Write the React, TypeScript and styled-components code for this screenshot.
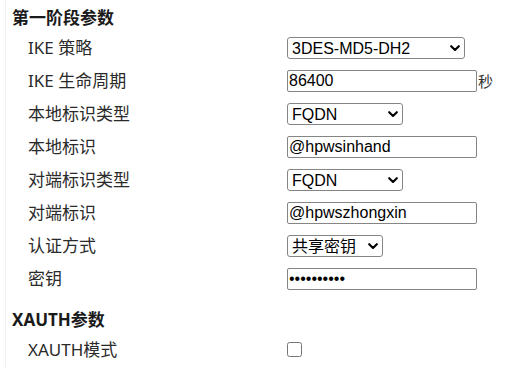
import React from "react";
import styled, { createGlobalStyle } from "styled-components";

const Global = createGlobalStyle`
  html, body { margin: 0; padding: 0; background: #fff; }
  body { font-family: "Noto Sans", "Noto Sans CJK SC", sans-serif; }
`;

const Frame = styled.div`
  margin-left: 5px;
  border-left: 1px solid #f1f1f1;
  height: 368px;
  padding-top: 1px;
  box-sizing: border-box;
`;

const Section = styled.section<{ $gap?: number }>`
  margin-top: ${(p) => p.$gap ?? 0}px;
`;

const Header = styled.div`
  height: 30px;
  display: flex;
  align-items: center;
  padding-left: 6px;
  font-family: "Noto Sans", "Noto Sans CJK SC", sans-serif;
  font-weight: 700;
  font-size: 17px;
  color: #1a1a1a;
`;

const Row = styled.div`
  height: 33px;
  display: grid;
  grid-template-columns: 259px 1fr;
  align-items: center;
  padding-left: 22px;
`;

const Label = styled.div`
  font-family: "Noto Sans", "Noto Sans CJK SC", sans-serif;
  font-size: 17px;
  line-height: 20px;
  color: #2a2a2a;
`;

const Field = styled.div`
  display: flex;
  align-items: center;
`;

const SelectBox = styled.div<{ $w: number }>`
  position: relative;
  width: ${(p) => p.$w}px;
  height: 22px;
`;

const Select = styled.select`
  appearance: none;
  -webkit-appearance: none;
  width: 100%;
  height: 100%;
  font-family: "Liberation Sans", Arial, "Noto Sans CJK SC", sans-serif;
  font-size: 16px;
  color: #000;
  background: #fff;
  border: 1px solid #858585;
  border-radius: 3px;
  padding: 0 0 0 4px;
  margin: 0;
  box-sizing: border-box;
  outline: none;
`;

const Chevron = styled.svg`
  position: absolute;
  right: 5px;
  top: 8px;
  width: 10px;
  height: 7px;
  pointer-events: none;
`;

const Input = styled.input`
  width: 190px;
  height: 22px;
  font-family: "Liberation Sans", Arial, sans-serif;
  font-size: 16px;
  color: #000;
  background: #fff;
  border: 1px solid #858585;
  border-radius: 2px;
  padding: 0 1px;
  margin: 0;
  box-sizing: border-box;
  outline: none;
`;

const Unit = styled.span`
  font-family: "Noto Sans CJK SC", sans-serif;
  font-size: 15px;
  color: #333;
  margin-left: 1px;
`;

const Check = styled.input`
  width: 15px;
  height: 15px;
  margin: 0;
`;

function Dropdown({ w, value }: { w: number; value: string }) {
  return (
    <SelectBox $w={w}>
      <Select defaultValue={value}>
        <option>{value}</option>
      </Select>
      <Chevron viewBox="0 0 10 7">
        <path d="M1.2 1.2 L5 5 L8.8 1.2" fill="none" stroke="#000" strokeWidth="2.1" strokeLinecap="round" strokeLinejoin="round" />
      </Chevron>
    </SelectBox>
  );
}

export default function App() {
  return (
    <>
      <Global />
      <Frame>
        <Section>
          <Header>第一阶段参数</Header>
          <Row>
            <Label>IKE 策略</Label>
            <Field>
              <Dropdown w={178} value="3DES-MD5-DH2" />
            </Field>
          </Row>
          <Row>
            <Label>IKE 生命周期</Label>
            <Field>
              <Input defaultValue="86400" />
              <Unit>秒</Unit>
            </Field>
          </Row>
          <Row>
            <Label>本地标识类型</Label>
            <Field>
              <Dropdown w={116} value="FQDN" />
            </Field>
          </Row>
          <Row>
            <Label>本地标识</Label>
            <Field>
              <Input defaultValue="@hpwsinhand" />
            </Field>
          </Row>
          <Row>
            <Label>对端标识类型</Label>
            <Field>
              <Dropdown w={116} value="FQDN" />
            </Field>
          </Row>
          <Row>
            <Label>对端标识</Label>
            <Field>
              <Input defaultValue="@hpwszhongxin" />
            </Field>
          </Row>
          <Row>
            <Label>认证方式</Label>
            <Field>
              <Dropdown w={96} value="共享密钥" />
            </Field>
          </Row>
          <Row>
            <Label>密钥</Label>
            <Field>
              <Input type="password" defaultValue="1234567890" />
            </Field>
          </Row>
        </Section>
        <Section $gap={8}>
          <Header>XAUTH参数</Header>
          <Row>
            <Label>XAUTH模式</Label>
            <Field>
              <Check type="checkbox" />
            </Field>
          </Row>
        </Section>
      </Frame>
    </>
  );
}
